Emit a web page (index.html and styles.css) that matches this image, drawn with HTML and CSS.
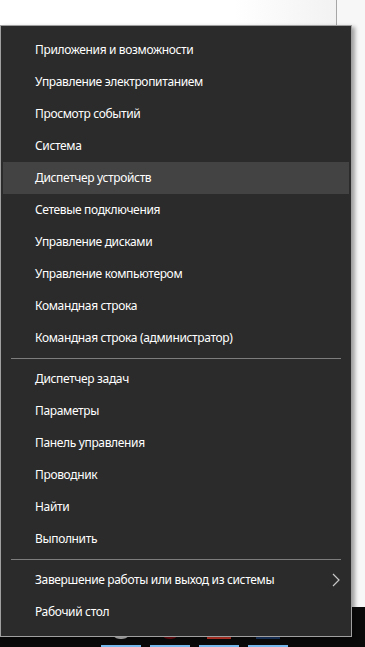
FILE: index.html
```html
<!DOCTYPE html>
<html lang="ru">
<head>
  <meta charset="UTF-8">
  <title>Меню Win+X</title>
  <meta name="viewport" content="width=device-width, initial-scale=1.0">
  <link rel="stylesheet" href="styles.css">
</head>
<body>

<div class="desktop">
  <div class="window-left"></div>
  <div class="window-right"></div>
</div>

<!-- Taskbar -->
<div class="taskbar">
  <div class="task-btn"><span class="task-icon icon-gray"></span></div>
  <div class="task-btn"><span class="task-icon icon-darkred"></span></div>
  <div class="task-btn"><span class="task-icon icon-red"></span></div>
  <div class="task-btn"><span class="task-icon icon-blue"></span></div>
</div>

<!-- Context menu -->
<div class="menu">
  <div class="menu-item">Приложения и возможности</div>
  <div class="menu-item">Управление электропитанием</div>
  <div class="menu-item">Просмотр событий</div>
  <div class="menu-item">Система</div>
  <div class="menu-item active">Диспетчер устройств</div>
  <div class="menu-item">Сетевые подключения</div>
  <div class="menu-item">Управление дисками</div>
  <div class="menu-item">Управление компьютером</div>
  <div class="menu-item">Командная строка</div>
  <div class="menu-item">Командная строка (администратор)</div>

  <div class="menu-sep"></div>

  <div class="menu-item">Диспетчер задач</div>
  <div class="menu-item">Параметры</div>
  <div class="menu-item">Панель управления</div>
  <div class="menu-item">Проводник</div>
  <div class="menu-item">Найти</div>
  <div class="menu-item">Выполнить</div>

  <div class="menu-sep"></div>

  <div class="menu-item has-sub">
    Завершение работы или выход из системы
    <svg class="chevron" width="8" height="14" viewBox="0 0 8 14">
      <path d="M1 1 L7 7 L1 13" fill="none" stroke="#c8c8c8" stroke-width="1.2"/>
    </svg>
  </div>
  <div class="menu-item">Рабочий стол</div>
</div>

</body>
</html>
```

FILE: styles.css
```css
/* Global */
body {
  margin: 0;
  width: 365px;
  height: 647px;
  overflow: hidden;
  position: relative;
  font-family: 'Noto Sans', 'Open Sans', sans-serif;
  background: #0a0a0a;
}

/* Windows behind the menu */
.desktop {
  display: grid;
  grid-template-columns: 336px 1fr;
  height: 607px;
}

.window-left {
  background: linear-gradient(to right, #ffffff 70%, #f2f2f2);
}

.window-right {
  background: #f7f7f7;
  border-left: 1px solid #a6a6a6;
}

/* Taskbar */
.taskbar {
  height: 40px;
  background: #0a0a0a;
  display: flex;
  padding-left: 99px;
}

.task-btn {
  width: 49px;
  height: 40px;
  display: flex;
  flex-direction: column;
  align-items: center;
  justify-content: space-between;
  box-sizing: border-box;
  padding-top: 8px;
}

.task-btn::after {
  content: "";
  display: block;
  width: 40px;
  height: 2px;
  background: #76b9ed;
  margin-right: 5px;
}

.task-icon {
  display: block;
  width: 24px;
  height: 24px;
  margin-right: 5px;
}

.icon-gray {
  border-radius: 50%;
  background: #c9c9c9;
}

.icon-darkred {
  border-radius: 50%;
  background: #7a0c12;
}

.icon-red {
  background: #d33a2c;
}

.icon-blue {
  background: #1c3a6b;
}

/* Win+X menu */
.menu {
  position: absolute;
  left: 0;
  top: 25px;
  width: 350px;
  background: #2b2b2b;
  border: 1px solid #a0a0a0;
  padding: 8px 0 8px;
  box-shadow: 3px 2px 4px rgba(0, 0, 0, 0.35);
  color: #ffffff;
  font-size: 12px;
  letter-spacing: -0.35px;
}

.menu-item {
  height: 32px;
  line-height: 32px;
  margin: 0 2px;
  padding-left: 32px;
  display: flex;
  align-items: center;
  white-space: nowrap;
}

.menu-item.active {
  background: #434343;
}

.menu-item.has-sub {
  justify-content: space-between;
  padding-right: 9px;
}

.chevron {
  display: block;
}

.menu-sep {
  height: 1px;
  background: #7d7d7d;
  margin: 4px 10px 4px 10px;
}
```
